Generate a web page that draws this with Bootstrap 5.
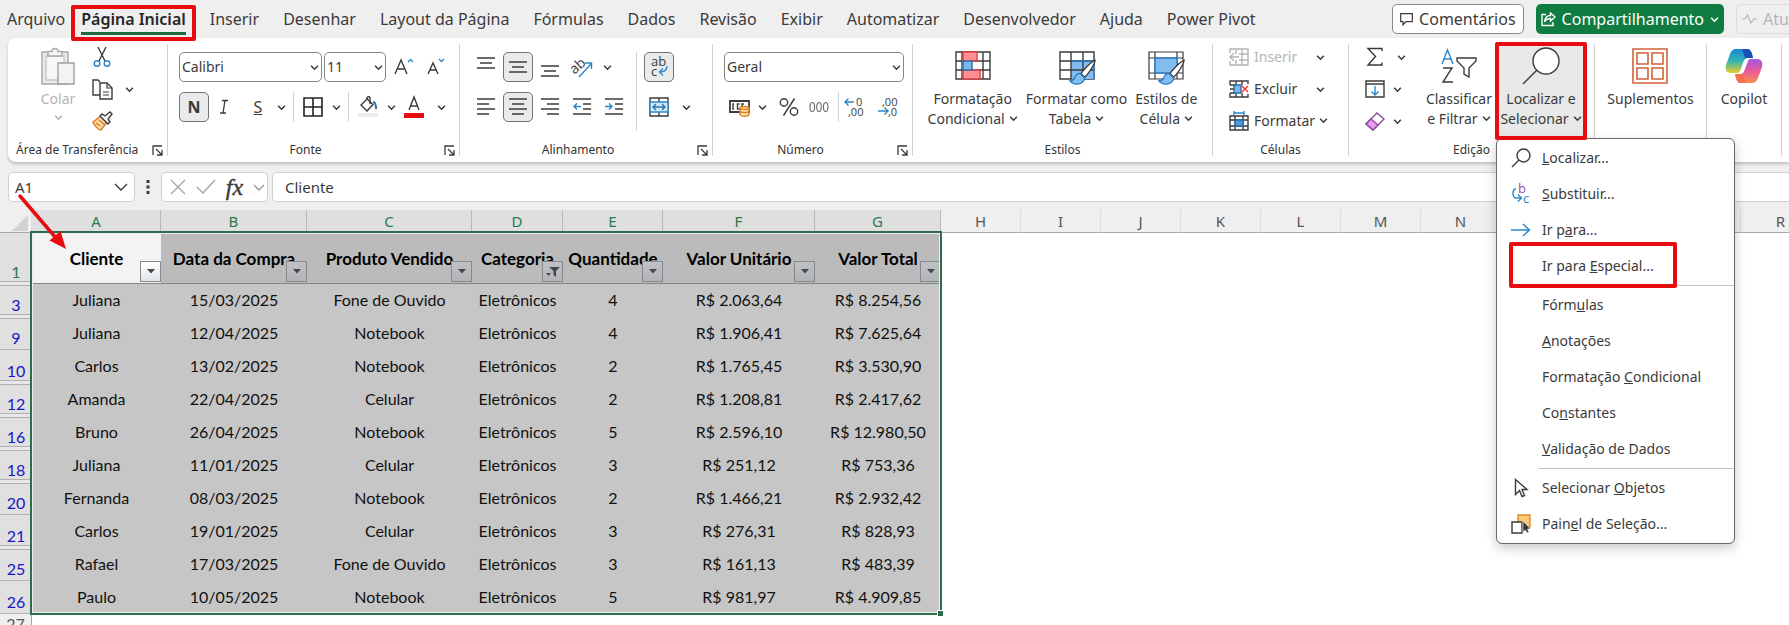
<!DOCTYPE html>
<html lang="pt-BR">
<head>
<meta charset="utf-8">
<meta name="viewport" content="width=device-width, initial-scale=1">
<title>Planilha de vendas</title>
<link href="https://cdn.jsdelivr.net/npm/bootstrap@5.3.0/dist/css/bootstrap.min.css" rel="stylesheet">
<script src="https://cdn.jsdelivr.net/npm/bootstrap@5.3.0/dist/js/bootstrap.bundle.min.js" defer></script>
<style>
  :root { --ink: #3b3b3b; --edge: #2f6b4c; --red: #e80c10; }
  body { font-family: "Noto Sans", "Open Sans", sans-serif; font-size: 14px; line-height: 20px; color: var(--ink); background: #fff; overflow: hidden; }
  button { font: inherit; color: inherit; background: none; border: 0; padding: 0; }
  svg { display: block; flex: none; fill: none; stroke: var(--ink); stroke-width: 1.4; overflow: visible; }
  svg text { stroke: none; fill: var(--ink); font-family: "Open Sans", sans-serif; }
  .shell { background: #efefef; }

  /* title tabs */
  .topbar { height: 38px; }
  .tab { position: relative; padding: 0 12px; font-size: 16px; line-height: 38px; color: var(--ink); text-decoration: none; white-space: nowrap; }
  .tab.first { padding: 0 4px 0 7px; }
  .tab.current { font-weight: 600; color: #262626; }
  .tab.current span { display: block; height: 35px; border-bottom: 3px solid #1f6b3f; }
  .marked { position: relative; }
  .marked::after { content: ""; position: absolute; inset: 0; border: 4px solid var(--red); border-radius: 2px; z-index: 1200; pointer-events: none; }
  .tab.marked::after { inset: 5px 2px -3px 2px; }
  .pill { height: 30px; border-radius: 5px; font-size: 16px; white-space: nowrap; }
  .pill-note { background: #fff; border: 1px solid #8a8a8a; padding: 0 7px; gap: 6px; }
  .pill-share { background: #107c41; color: #fff; padding: 0 5px; gap: 6px; }
  .pill-share svg { stroke: #fff; }
  .pill-update { border: 1px solid #dcdcdc; border-right: 0; border-radius: 5px 0 0 5px; color: #b5b5b5; width: 53px; padding-left: 5px; gap: 6px; }
  .pill-update svg { stroke: #b5b5b5; }

  /* ribbon */
  .ribbon { margin-left: 8px; height: 124px; padding: 6px 0; background: #fff; border-radius: 8px 0 0 8px; box-shadow: 0 2px 3px rgba(0,0,0,.2); }
  .group { position: relative; flex: none; border-right: 1px solid #d2d2d2; }
  .group-label { font-size: 12px; line-height: 12px; color: #333; }
  .launch { position: absolute; right: 4px; bottom: 0; }
  .rows { padding: 8px 0 0 11px; }
  .upper { margin-bottom: 10px; }
  .snug { gap: 2px; }
  .tool { width: 30px; height: 30px; display: flex; align-items: center; justify-content: center; flex: none; font-size: 16px; }
  .tool.on { background: #eaeaea; border: 1px solid #737373; border-radius: 5px; }
  .drop { width: 16px; height: 30px; display: flex; align-items: center; justify-content: center; flex: none; }
  .rule { width: 1px; height: 30px; background: #d2d2d2; flex: none; }
  .rule-tall { height: 79px; margin: 0 7px; }
  .pick { height: 30px; border: 1px solid #868686; border-radius: 5px; background: #fff; position: relative; }
  .pick select { width: 100%; height: 28px; border: 0; background: none; appearance: none; padding: 0 2px; color: inherit; outline: 0; }
  .pick svg { position: absolute; right: 2px; top: 10px; pointer-events: none; }
  .pick-font { width: 143px; } .pick-size { width: 62px; } .pick-number { width: 180px; }
  .big { padding-top: 4px; display: flex; flex-direction: column; align-items: center; line-height: 20px; white-space: nowrap; }
  .big .art { height: 36px; margin-bottom: 5px; display: flex; align-items: center; }
  .big .chev, .line-tool .chev { display: inline-block; vertical-align: 1px; margin-left: 4px; }
  .stack { margin-top: -3px; }
  .line-tool { height: 32px; gap: 5px; white-space: nowrap; }
  .stack .drop { height: 32px; }
  .faded { color: #b4b4b4; } .faded svg { stroke: #b4b4b4; }
  .find { width: 90px; height: 95px; background: #e8e8e8; }
  .find.marked::after { inset: -2px -1px -1px -1px; }
  .w-clip { width: 160px; } .w-font { width: 292px; } .w-align { width: 253px; } .w-num { width: 200px; }
  .w-style { width: 300px; } .w-cells { width: 136px; } .w-edit { width: 246px; } .w-add { width: 112px; } .w-pilot { width: 75px; }

  /* drop-down list */
  .find-menu { --bs-dropdown-border-color: #686868; --bs-dropdown-border-radius: 6px; --bs-dropdown-padding-y: 1px; width: 239px; top: 94px; left: 0; font-size: 14px; box-shadow: 0 4px 12px rgba(0,0,0,.22); color: var(--ink); }
  .find-menu .dropdown-item { height: 36px; display: flex; align-items: center; color: var(--ink); padding: 0 13px; gap: 10px; }
  .find-menu .slot { width: 22px; display: flex; justify-content: center; flex: none; }
  .find-menu hr { margin: 1px 0 1px 41px; border-top: 1px solid #c4c4c4; opacity: 1; }
  .find-menu .marked::after { inset: -6px 57px -4px 12px; }

  /* formula bar */
  .formula { padding: 10px 0 8px 8px; }
  .field { height: 30px; background: #fff; border: 1px solid #d0d0d0; border-radius: 5px; }
  .field input { border: 0; outline: 0; background: none; color: inherit; min-width: 0; font-size: 15px; line-height: 20px; padding: 0; }
  .name-box { width: 127px; padding: 0 6px; }
  .fx-box { width: 107px; padding: 0 2px 0 8px; }
  .fx-box em { font: italic 400 24px/24px "Liberation Serif", serif; -webkit-text-stroke: 0.4px; }
  .value-box { border-right: 0; border-radius: 5px 0 0 5px; padding-left: 12px; }
  .more { width: 26px; }

  /* sheet */
  .sheet { position: relative; overflow: hidden; }
  .cells { width: 1821px; table-layout: fixed; border-collapse: separate; border-spacing: 0; font-family: Lato, "Open Sans", sans-serif; font-size: 16px; line-height: 20px; color: #111; text-align: center; }
  .cells th, .cells td { padding: 0; }
  .cells thead th { height: 23px; font: 400 15px/22px "Noto Sans", sans-serif; background: #efefef; color: #555; border-right: 1px solid #dcdcdc; border-bottom: 1px solid #a8a8a8; }
  .cells thead .sel { background: #dfdfdf; color: #2a7a4c; border-right-color: #b8b8b8; }
  .cells thead .corner svg { margin: 3px 0 0 12px; }
  .cells tbody tr { height: 33px; }
  .cells tbody tr.top { height: 51px; }
  .cells tbody td { background: #c6c6c6; padding-bottom: 2px; }
  .cells .top td { position: relative; background: #bbb; font-size: 17px; font-weight: 700; color: #000; border-bottom: 1px solid #858585; white-space: nowrap; padding: 2px 0 0; }
  .cells .top td.active { background: #f3f3f3; }
  .cells tbody th { position: relative; background: #e0e0e0; color: #1a14c4; font-weight: 400; vertical-align: bottom; padding-bottom: 1px; border-bottom: 1px solid #b5b5b5; }
  .cells .top th { color: #2a7a4c; }
  .cells tbody th.skip { border-bottom-color: #e0e0e0; }
  .cells tbody th.skip::after { content: ""; position: absolute; z-index: 1; left: 0; right: 0; bottom: -3px; height: 5px; border: solid #b0b0b0; border-width: 1px 0; background: #e8e8e8; }
  .cells tr.next { height: 22px; }
  .cells .next th { background: #efefef; color: #555; border-right: 1px solid #a8a8a8; }
  .filter { position: absolute; right: 0; bottom: 1px; width: 21px; height: 21px; border: 1px solid #858a92; background: linear-gradient(#bfc1c5, #b3b4b8); display: flex; align-items: center; justify-content: center; }
  .active .filter { background: linear-gradient(#fff, #e2e5ea); }
  .filter svg { stroke: none; fill: #44484e; }
  .range { position: absolute; left: 30px; top: 21px; width: 912px; height: 384px; border: 2px solid var(--edge); box-shadow: inset 0 0 0 1px #e9eeea; pointer-events: none; z-index: 2; }
  .range::after { content: ""; position: absolute; right: -4px; bottom: -4px; width: 7px; height: 7px; background: var(--edge); border: 1px solid #fff; }
  .pointer { position: absolute; left: 16px; top: 192px; z-index: 5; pointer-events: none; }
</style>
</head>
<body>
<svg width="0" height="0" class="position-absolute" aria-hidden="true">
  <defs>
    <symbol id="down" viewBox="0 0 8 8"><path d="M1 2.500l3 3 3-3"/></symbol>
    <symbol id="corner" viewBox="0 0 11 11"><path d="M1 10V1h9M4 4l6 6M10 5v5H5" stroke-width="1.300"/></symbol>
    <symbol id="tri" viewBox="0 0 8 5"><path d="M0 0h8L4 4.500z"/></symbol>
    <symbol id="brush" viewBox="0 0 30 28"><path d="M29 1c-5 2-13 11-15 14l4 4C21 16 28 7 29 1z" fill="#fff"/><path d="M13 15c-4 0-5 2-6 5-1 2-3 3-5 3 4 5 14 5 16-3z" fill="#83bdf0" stroke="#2b7cc0"/></symbol>
  </defs>
</svg>

<div class="shell">
  <header class="topbar d-flex">
    <nav class="d-flex flex-nowrap" aria-label="Guias">
      <a class="tab first" href="#">Arquivo</a>
      <a class="tab current marked" href="#" aria-current="page"><span>Página Inicial</span></a>
      <a class="tab" href="#">Inserir</a>
      <a class="tab" href="#">Desenhar</a>
      <a class="tab" href="#">Layout da Página</a>
      <a class="tab" href="#">Fórmulas</a>
      <a class="tab" href="#">Dados</a>
      <a class="tab" href="#">Revisão</a>
      <a class="tab" href="#">Exibir</a>
      <a class="tab" href="#">Automatizar</a>
      <a class="tab" href="#">Desenvolvedor</a>
      <a class="tab" href="#">Ajuda</a>
      <a class="tab" href="#">Power Pivot</a>
    </nav>
    <div class="d-flex ms-auto gap-2 pt-1">
      <button class="pill pill-note d-flex align-items-center me-1" type="button">
        <svg width="13" height="13" viewBox="0 0 13 13"><path d="M.7.7h11.600v8H6L3 12V8.700H.7z" stroke-width="1.200"/></svg>Comentários
      </button>
      <button class="pill pill-share d-flex align-items-center me-1" type="button">
        <svg width="15" height="15" viewBox="0 0 15 15" stroke-width="1.200"><path d="M5 2.500H1v11h11V10M9.500 1l4.500 4-4.500 4V6.500C7 6.500 5 7.500 3.500 10 4 6 6 3.500 9.500 3.500z"/></svg>Compartilhamento
        <svg width="9" height="9"><use href="#down"/></svg>
      </button>
      <button class="pill pill-update d-flex align-items-center" type="button" disabled>
        <svg width="15" height="12" viewBox="0 0 15 12"><path d="M0 6h3l2.500-4 3.500 8 2.500-4H15" stroke-width="1.200"/></svg>Atu
      </button>
    </div>
  </header>

  <div class="ribbon d-flex">
    <section class="group w-clip d-flex flex-column">
      <div class="d-flex flex-grow-1">
        <button class="big faded ms-4 ps-2" type="button" disabled>
          <span class="art"><svg width="36" height="38" viewBox="0 0 36 38"><path d="M2 5h26v32H2z" fill="#e9e9e9" stroke="#a8a8a8"/><path d="M6 9h18v24H6z" fill="#f7f7f7" stroke="#c8c8c8"/><path d="M8 9V4.500h4a3 3 0 016 0h4V9z" fill="#f5f5f5" stroke="#a8a8a8"/><path d="M18 16h16v21H18z" fill="#f3f3f3" stroke="#a0a0a0"/></svg></span>
          <span>Colar</span>
          <svg width="9" height="9" class="mt-1"><use href="#down"/></svg>
        </button>
        <div class="stack d-flex flex-column ms-2 ps-1">
          <button class="line-tool ps-1 align-self-start" type="button" aria-label="Recortar"><svg width="20" height="22" viewBox="0 0 20 22"><path d="M6 1l7 14M14 1L7 15"/><circle cx="5" cy="17.500" r="2.800" stroke="#2b88c8"/><circle cx="15" cy="17.500" r="2.800" stroke="#2b88c8"/></svg></button>
          <span class="d-flex"><button class="line-tool ps-1" type="button" aria-label="Copiar"><svg width="21" height="21" viewBox="0 0 21 21"><path d="M8 16H1V1h5l2 2"/><path d="M8 4h7l5 5v11H8z" fill="#fff"/><path d="M15 4v5h5M11 13h6M11 16h6" stroke-width="1.200"/></svg></button>
          <button class="drop ms-2" type="button" aria-label="Opções de copiar"><svg width="9" height="9"><use href="#down"/></svg></button></span>
          <button class="line-tool ps-1 align-self-start" type="button" aria-label="Pincel de formatação"><svg width="22" height="20" viewBox="0 0 22 20"><path d="M9 5l6 6-6 8c-3 0-7-5-8-8z" fill="#fbd9a5" stroke="#dd7d1c"/><path d="M4 12l4 3M7 9l6 5" stroke="#dd7d1c"/><path d="M8 5l2-2 3 2 5-4 2 2-4 5 2 3-2 2z" fill="#fff"/></svg></button>
        </div>
      </div>
      <div class="group-label ps-2">Área de Transferência</div>
      <svg class="launch" width="11" height="11"><use href="#corner"/></svg>
    </section>

    <section class="group w-font d-flex flex-column">
      <div class="rows flex-grow-1 d-flex flex-column">
        <div class="upper d-flex snug">
          <div class="pick pick-font"><select aria-label="Fonte"><option>Calibri</option></select><svg width="9" height="9"><use href="#down"/></svg></div>
          <div class="pick pick-size"><select aria-label="Tamanho da fonte"><option>11</option></select><svg width="9" height="9"><use href="#down"/></svg></div>
          <button class="tool" type="button" aria-label="Aumentar fonte"><svg width="22" height="20" viewBox="0 0 22 20"><path d="M3 17L9 3 15 17M5.500 12h7"/><path d="M16 5l2.500-2.500L21 5" stroke="#2b88c8"/></svg></button>
          <button class="tool" type="button" aria-label="Diminuir fonte"><svg width="20" height="20" viewBox="0 0 20 20"><path d="M3 17L8 6l5 11M5 13h6"/><path d="M14 2l2.500 2.500L19 2" stroke="#2b88c8"/></svg></button>
        </div>
        <div class="d-flex">
          <button class="tool on fw-bold" type="button">N</button>
          <button class="tool" type="button" aria-label="Itálico"><svg width="10" height="16" viewBox="0 0 10 16"><path d="M3 1.500h6M1 14h6M6 1.500L4 14" stroke-width="1.300"/></svg></button>
          <button class="tool text-decoration-underline ms-1" type="button">S</button>
          <button class="drop" type="button" aria-label="Opções de sublinhado"><svg width="9" height="9"><use href="#down"/></svg></button>
          <span class="rule mx-1"></span>
          <button class="tool" type="button" aria-label="Bordas"><svg width="20" height="20" viewBox="0 0 20 20"><path d="M1 1h18v18H1zM10 1v18M1 10h18" stroke="#222" stroke-width="1.600"/></svg></button>
          <button class="drop" type="button" aria-label="Opções de bordas"><svg width="9" height="9"><use href="#down"/></svg></button>
          <span class="rule mx-1"></span>
          <button class="tool" type="button" aria-label="Cor de preenchimento"><svg width="22" height="22" viewBox="0 0 22 22"><path d="M10 3L4 9l6 6 6-6.500z"/><path d="M10 3V1.500c1-1 2.500-1 3 0V8"/><path d="M16 6c2.500 0 3 2 3 7" stroke="#2b6fa8" stroke-width="2"/><path d="M1 17h20v4H1z" fill="#ececec" stroke="none"/></svg></button>
          <button class="drop" type="button" aria-label="Opções de preenchimento"><svg width="9" height="9"><use href="#down"/></svg></button>
          <button class="tool" type="button" aria-label="Cor da fonte"><svg width="22" height="22" viewBox="0 0 22 22"><path d="M6 14l5-13 5 13M7.500 10h7"/><path d="M1 17h20v5H1z" fill="#e80c10" stroke="none"/></svg></button>
          <button class="drop ms-1" type="button" aria-label="Opções de cor da fonte"><svg width="9" height="9"><use href="#down"/></svg></button>
        </div>
      </div>
      <div class="group-label text-center pe-3">Fonte</div>
      <svg class="launch" width="11" height="11"><use href="#corner"/></svg>
    </section>

    <section class="group w-align d-flex flex-column">
      <div class="rows flex-grow-1 d-flex">
        <div>
          <div class="upper d-flex snug">
            <button class="tool" type="button" aria-label="Alinhar em cima"><svg width="18" height="20" viewBox="0 0 18 20"><path d="M0 1h18M3 6h12M0 11h18"/></svg></button>
            <button class="tool on" type="button" aria-label="Alinhar no meio"><svg width="18" height="20" viewBox="0 0 18 20"><path d="M0 5h18M3 10h12M0 15h18"/></svg></button>
            <button class="tool" type="button" aria-label="Alinhar embaixo"><svg width="18" height="20" viewBox="0 0 18 20"><path d="M0 9h18M3 14h12M0 19h18"/></svg></button>
            <button class="tool" type="button" aria-label="Orientação"><svg width="22" height="22" viewBox="0 0 22 22"><text x="0" y="14" font-size="14" transform="rotate(-42 8 12)">ab</text><path d="M8 21L20 8M14 7h6.500v6" stroke="#2b88c8"/></svg></button>
            <button class="drop" type="button" aria-label="Opções de orientação"><svg width="9" height="9"><use href="#down"/></svg></button>
          </div>
          <div class="d-flex snug">
            <button class="tool" type="button" aria-label="À esquerda"><svg width="18" height="20" viewBox="0 0 18 20"><path d="M0 2h18M0 7h12M0 12h18M0 17h12"/></svg></button>
            <button class="tool on" type="button" aria-label="Centralizar"><svg width="18" height="20" viewBox="0 0 18 20"><path d="M0 2h18M3 7h12M0 12h18M3 17h12"/></svg></button>
            <button class="tool" type="button" aria-label="À direita"><svg width="18" height="20" viewBox="0 0 18 20"><path d="M0 2h18M6 7h12M0 12h18M6 17h12"/></svg></button>
            <button class="tool" type="button" aria-label="Diminuir recuo"><svg width="18" height="20" viewBox="0 0 18 20"><path d="M0 2h18M10 7h8M10 12h8M0 17h18"/><path d="M8 9.500H1M4 6.500l-3 3 3 3" stroke="#2b88c8"/></svg></button>
            <button class="tool" type="button" aria-label="Aumentar recuo"><svg width="18" height="20" viewBox="0 0 18 20"><path d="M0 2h18M10 7h8M10 12h8M0 17h18"/><path d="M0 9.500h7M4 6.500l3 3-3 3" stroke="#2b88c8"/></svg></button>
          </div>
        </div>
        <span class="rule rule-tall"></span>
        <div>
          <button class="tool on upper" type="button" aria-label="Quebrar texto"><svg width="20" height="22" viewBox="0 0 20 22"><text x="2" y="10" font-size="13">ab</text><text x="2" y="20" font-size="13">c</text><path d="M18 10c0 4-2 6-7 6M14 12.500l-3.500 3.500 3.500 3.500" stroke="#2b88c8"/></svg></button>
          <div class="d-flex">
            <button class="tool" type="button" aria-label="Mesclar e centralizar"><svg width="20" height="20" viewBox="0 0 20 20"><path d="M1 1h18v18H1zM10 1v4M10 15v4"/><path d="M1 5h18v10H1z" fill="#d3e8f8" stroke="#2b88c8"/><path d="M4 10h12M7 7l-3 3 3 3M13 7l3 3-3 3" stroke="#2b6fa8"/></svg></button>
            <button class="drop ms-1" type="button" aria-label="Opções de mesclagem"><svg width="9" height="9"><use href="#down"/></svg></button>
          </div>
        </div>
      </div>
      <div class="group-label text-center pe-3">Alinhamento</div>
      <svg class="launch" width="11" height="11"><use href="#corner"/></svg>
    </section>

    <section class="group w-num d-flex flex-column">
      <div class="rows flex-grow-1">
        <div class="pick pick-number upper"><select aria-label="Formato de número"><option>Geral</option></select><svg width="9" height="9"><use href="#down"/></svg></div>
        <div class="d-flex">
          <button class="tool" type="button" aria-label="Formato contábil"><svg width="21" height="20" viewBox="0 0 21 20"><path d="M1 4h19v11H1z" stroke-width="1.800"/><path d="M5 7H4v5h1M10.500 7H8.500v5h2M15 7h-2v3"/><path d="M11 11c0-2 9-2 9 0v6c0 3-9 3-9 0z" fill="#fde3bd" stroke="#dd7d1c"/><path d="M11 11c0 2 9 2 9 0M11 14c0 2 9 2 9 0" stroke="#dd7d1c"/></svg></button>
          <button class="drop me-1" type="button" aria-label="Opções de moeda"><svg width="9" height="9"><use href="#down"/></svg></button>
          <button class="tool" type="button" aria-label="Porcentagem"><svg width="20" height="20" viewBox="0 0 20 20"><circle cx="5" cy="5.500" r="3.700"/><circle cx="15" cy="14.500" r="3.700"/><path d="M15.500 1.500l-11 17"/></svg></button>
          <button class="tool me-1" type="button" aria-label="Separador de milhares"><svg width="20" height="14" viewBox="0 0 20 14"><g stroke="#6a6a6a" stroke-width="1.100"><ellipse cx="3.300" cy="7" rx="2.300" ry="4.500"/><ellipse cx="10" cy="7" rx="2.300" ry="4.500"/><ellipse cx="16.700" cy="7" rx="2.300" ry="4.500"/></g></svg></button>
          <span class="rule"></span>
          <button class="tool" type="button" aria-label="Aumentar casas decimais"><svg width="22" height="22" viewBox="0 0 22 22"><text x="13" y="10" font-size="11">0</text><text x="5" y="20" font-size="11">,00</text><path d="M11 6H2M5.500 2.500L2 6l3.500 3.500" stroke="#2b88c8"/></svg></button>
          <button class="tool ms-1" type="button" aria-label="Diminuir casas decimais"><svg width="22" height="22" viewBox="0 0 22 22"><text x="5" y="10" font-size="11">,00</text><text x="11" y="20" font-size="11">,0</text><path d="M1 15h10M7.500 11.500L11 15l-3.500 3.500" stroke="#2b88c8"/></svg></button>
        </div>
      </div>
      <div class="group-label text-center pe-4">Número</div>
      <svg class="launch" width="11" height="11"><use href="#corner"/></svg>
    </section>

    <section class="group w-style d-flex flex-column">
      <div class="flex-grow-1 d-flex justify-content-center gap-2">
        <button class="big" type="button">
          <span class="art"><svg width="36" height="30" viewBox="0 0 36 30"><path d="M1 1h34v27H1zM1 10h34M1 19h34M7 1v27M28 1v27"/><path d="M8 1h14v9H8zM8 19h17v9H8z" fill="#ff8f92" stroke="#dd3c3f"/><path d="M8 10h9v9H8z" fill="#7db8ec" stroke="#2b6fa8"/></svg></span>
          <span>Formatação</span><span>Condicional<svg class="chev" width="9" height="9"><use href="#down"/></svg></span>
        </button>
        <button class="big" type="button">
          <span class="art"><svg width="40" height="36" viewBox="0 0 40 36"><path d="M3 4h34v27H3z"/><path d="M14 13h23v18H14z" fill="#83bdf0" stroke="none"/><path d="M3 13h34M3 22h34M14 4v27M26 4v27"/><path d="M15 13h22v18" stroke="#2b7cc0"/><use href="#brush" x="11" y="11" width="28" height="27"/></svg></span>
          <span>Formatar como</span><span>Tabela<svg class="chev" width="9" height="9"><use href="#down"/></svg></span>
        </button>
        <button class="big" type="button">
          <span class="art"><svg width="40" height="36" viewBox="0 0 40 36"><path d="M3 4h34v27H3zM3 10h34M3 25h34M9 4v27M31 4v27" stroke-width="1.200"/><path d="M9 10h22v15H9z" fill="#83bdf0" stroke="#2b7cc0"/><use href="#brush" x="11" y="11" width="28" height="27"/></svg></span>
          <span>Estilos de</span><span>Célula<svg class="chev" width="9" height="9"><use href="#down"/></svg></span>
        </button>
      </div>
      <div class="group-label text-center">Estilos</div>
    </section>

    <section class="group w-cells d-flex flex-column ps-3">
      <div class="stack flex-grow-1">
        <div class="d-flex justify-content-between pe-3"><button class="line-tool faded d-flex align-items-center" type="button" disabled><svg width="20" height="18" viewBox="0 0 20 18"><path d="M1 5V1h18v16H1v-4M7 1v5M13 1v16M7 12v5M10 6h9M10 12h9M10 9H1M5 5L1 9l4 4"/></svg>Inserir</button><button class="drop me-1" type="button" aria-label="Opções de inserir"><svg width="9" height="9"><use href="#down"/></svg></button></div>
        <div class="d-flex justify-content-between pe-3"><button class="line-tool d-flex align-items-center" type="button"><svg width="20" height="18" viewBox="0 0 20 18"><path d="M1 5V1h18v3M1 13v4h18v-3M7 1v4M13 1v4M7 13v4M13 13v4M1 5h5M1 13h5M1 9h4"/><path d="M5 5h7v8H5z" fill="#7db8ec" stroke="#2b6fa8"/><path d="M13 6l6 6M19 6l-6 6" stroke="#e33"/></svg>Excluir</button><button class="drop me-1" type="button" aria-label="Opções de excluir"><svg width="9" height="9"><use href="#down"/></svg></button></div>
        <button class="line-tool d-flex align-items-center" type="button"><svg width="20" height="20" viewBox="0 0 20 20"><path d="M1 5h18v14H1zM1 9h18M1 15h18M6 5v14M14 5v14"/><path d="M6 9h8v6H6z" fill="#4b9be0" stroke="#2b6fa8"/><path d="M5 2h10M5 0v4M15 0v4" stroke="#2b88c8"/></svg><span>Formatar<svg class="chev" width="9" height="9"><use href="#down"/></svg></span></button>
      </div>
      <div class="group-label text-center pe-3">Células</div>
    </section>

    <section class="group w-edit d-flex flex-column">
      <div class="flex-grow-1 d-flex">
        <div class="stack ps-3">
          <div class="d-flex"><button class="line-tool d-flex align-items-center" type="button" aria-label="AutoSoma"><svg width="20" height="20" viewBox="0 0 20 20"><path d="M17 4V1.500H3l7.500 8L3 18h14v-2.500"/></svg></button><button class="drop ms-2" type="button" aria-label="Opções de soma"><svg width="9" height="9"><use href="#down"/></svg></button></div>
          <div class="d-flex"><button class="line-tool d-flex align-items-center" type="button" aria-label="Preencher"><svg width="20" height="18" viewBox="0 0 20 18"><path d="M1 1h18v16H1zM1 4h18"/><path d="M10 6v9M6.500 11.500L10 15l3.500-3.500" stroke="#2b88c8"/></svg></button><button class="drop ms-1" type="button" aria-label="Opções de preencher"><svg width="9" height="9"><use href="#down"/></svg></button></div>
          <div class="d-flex"><button class="line-tool d-flex align-items-center" type="button" aria-label="Limpar"><svg width="20" height="20" viewBox="0 0 20 20"><path d="M12 2l7 6-11 11-7-6z" fill="#fff" stroke="#8c4aa0"/><path d="M6 8l7 6-5 5-7-6z" fill="#e79cf0" stroke="#8c4aa0"/></svg></button><button class="drop ms-1" type="button" aria-label="Opções de limpar"><svg width="9" height="9"><use href="#down"/></svg></button></div>
        </div>
        <button class="big ms-auto me-1" type="button">
          <span class="art"><svg width="36" height="36" viewBox="0 0 36 36"><path d="M1 16L6.500 2 12 16M3 11h7" stroke="#2b88c8"/><path d="M2 20h9L2 34h10"/><path d="M16 10h19v3l-7 7v9l-5-3v-6l-7-7z"/></svg></span>
          <span>Classificar</span><span>e Filtrar<svg class="chev" width="9" height="9"><use href="#down"/></svg></span>
        </button>
        <div class="dropdown me-2">
          <button class="big find marked" type="button" aria-expanded="true">
            <span class="art"><svg width="38" height="38" viewBox="0 0 38 38"><circle cx="24" cy="14" r="13" fill="#fff"/><path d="M15 23L1 37"/></svg></span>
            <span>Localizar e</span><span>Selecionar<svg class="chev" width="9" height="9"><use href="#down"/></svg></span>
          </button>
          <div class="dropdown-menu find-menu show">
            <a class="dropdown-item" href="#"><span class="slot"><svg width="20" height="20" viewBox="0 0 20 20"><circle cx="12.500" cy="7.500" r="6.500"/><path d="M8 12l-7 7"/></svg></span><span><u>L</u>ocalizar...</span></a>
            <a class="dropdown-item" href="#"><span class="slot"><svg width="20" height="22" viewBox="0 0 20 22"><text x="7" y="10" font-size="13" style="fill:#9a4bb0">b</text><text x="12" y="20" font-size="13" style="fill:#2b88c8">c</text><path d="M5 6c-4 0-4 9 0 9h5M7 11.500l3.500 3.500L7 18.500" stroke="#2b88c8"/></svg></span><span><u>S</u>ubstituir...</span></a>
            <a class="dropdown-item" href="#"><span class="slot"><svg width="20" height="16" viewBox="0 0 20 16"><path d="M0 8h18M12 2l6.500 6L12 14" stroke="#2b88c8"/></svg></span><span>Ir p<u>a</u>ra...</span></a>
            <a class="dropdown-item marked" href="#"><span class="slot"></span><span>Ir para <u>E</u>special...</span></a>
            <hr>
            <a class="dropdown-item" href="#"><span class="slot"></span><span>Fórm<u>u</u>las</span></a>
            <a class="dropdown-item" href="#"><span class="slot"></span><span><u>A</u>notações</span></a>
            <a class="dropdown-item" href="#"><span class="slot"></span><span>Formatação <u>C</u>ondicional</span></a>
            <a class="dropdown-item" href="#"><span class="slot"></span><span>Co<u>n</u>stantes</span></a>
            <a class="dropdown-item" href="#"><span class="slot"></span><span><u>V</u>alidação de Dados</span></a>
            <hr>
            <a class="dropdown-item" href="#"><span class="slot"><svg width="14" height="20" viewBox="0 0 14 20"><path d="M1.500 1.500v15l4-4 2.500 6 2.500-1-2.500-6H13z"/></svg></span><span>Selecionar <u>O</u>bjetos</span></a>
            <a class="dropdown-item" href="#"><span class="slot"><svg width="20" height="20" viewBox="0 0 20 20"><path d="M7 1h12v12H7z" fill="#fcc976" stroke="#dd8a2c"/><path d="M1 8h10v11H1z" fill="#fff"/><path d="M12 7v11l2.500-2 1.500 3 2-1-1.500-3h3z" fill="#333" stroke="#fff" stroke-width=".6"/></svg></span><span>Pain<u>e</u>l de Seleção...</span></a>
          </div>
        </div>
      </div>
      <div class="group-label text-center">Edição</div>
    </section>

    <section class="group w-add d-flex justify-content-center">
      <button class="big" type="button">
        <span class="art"><svg width="36" height="36" viewBox="0 0 36 36"><path d="M1 1h34v34H1zM5 5h11v11H5zM20 5h11v11H20zM5 20h11v11H5zM20 20h11v11H20z" stroke="#d2623a" stroke-width="1.600"/></svg></span>
        <span>Suplementos</span>
      </button>
    </section>
    <section class="group w-pilot d-flex justify-content-center">
      <button class="big" type="button">
        <span class="art"><svg width="38" height="36" viewBox="0 0 38 36">
          <defs>
            <linearGradient id="ga" x1="0" y1="0" x2="0" y2="1"><stop offset="0" stop-color="#1687dc"/><stop offset=".5" stop-color="#35b3b5"/><stop offset="1" stop-color="#e8cf22"/></linearGradient>
            <linearGradient id="gb" x1="0" y1="0" x2="0" y2="1"><stop offset="0" stop-color="#a456e0"/><stop offset=".5" stop-color="#ea5a9b"/><stop offset="1" stop-color="#fb8f4a"/></linearGradient>
          </defs>
          <path d="M11 1h11c3 0 4 2 5 5l1 4h-4c-4 0-5 2-6 5l-3 8c-1 2-2 2-4 2H6c-5 0-6-4-5-8L5 6c1-3 3-5 6-5z" fill="url(#ga)" stroke="none"/>
          <path d="M17 1h5c3 0 4 2 5 5l1 4h-8z" fill="#1b4fb8" stroke="none"/>
          <path d="M27 35H16c-3 0-4-2-5-5l-1-4h4c4 0 5-2 6-5l3-8c1-2 2-2 4-2h5c5 0 6 4 5 8l-4 11c-1 3-3 5-6 5z" fill="url(#gb)" stroke="none"/>
          <path d="M10 26h8l3 9h-5c-3 0-4-2-5-5z" fill="#f2704f" stroke="none"/></svg></span>
        <span>Copilot</span>
      </button>
    </section>
  </div>

  <div class="formula d-flex">
    <div class="field name-box d-flex align-items-center">
      <input class="flex-grow-1" type="text" aria-label="Caixa de nome" value="A1">
      <svg width="14" height="14" viewBox="0 0 14 14"><path d="M1 4l6 6 6-6"/></svg>
    </div>
    <div class="more d-flex align-items-center justify-content-center"><svg width="4" height="14" viewBox="0 0 4 14"><path d="M.5 0h3v3h-3zM.5 5.500h3v3h-3zM.5 11h3v3h-3z" fill="#3b3b3b" stroke="none"/></svg></div>
    <div class="field fx-box d-flex align-items-center justify-content-between me-1">
      <svg width="16" height="16" viewBox="0 0 16 16"><path d="M1 1l14 14M15 1L1 15" stroke="#a5a5a5"/></svg>
      <svg width="20" height="16" viewBox="0 0 20 16"><path d="M1 8l6 6L19 1" stroke="#a5a5a5"/></svg>
      <em>fx</em>
      <svg width="12" height="12" viewBox="0 0 12 12"><path d="M1 4l5 5 5-5" stroke="#999"/></svg>
    </div>
    <div class="field value-box flex-grow-1 d-flex align-items-center"><input class="w-100" type="text" aria-label="Barra de fórmulas" value="Cliente"></div>
  </div>
</div>

<main class="sheet">
  <table class="cells">
    <colgroup>
      <col style="width:32px"><col style="width:129px"><col style="width:146px"><col style="width:165px"><col style="width:91px"><col style="width:100px"><col style="width:152px"><col style="width:126px"><col span="11" style="width:80px">
    </colgroup>
    <thead>
      <tr>
        <th class="corner"><svg width="16" height="16" viewBox="0 0 16 16"><path d="M16 0v16H0z" fill="#d2d2d2" stroke="none"/></svg></th>
        <th class="sel">A</th><th class="sel">B</th><th class="sel">C</th><th class="sel">D</th><th class="sel">E</th><th class="sel">F</th><th class="sel">G</th>
        <th>H</th><th>I</th><th>J</th><th>K</th><th>L</th><th>M</th><th>N</th><th>O</th><th>P</th><th>Q</th><th>R</th>
      </tr>
    </thead>
    <tbody>
      <tr class="top">
        <th class="skip">1</th>
        <td class="active">Cliente<button class="filter" type="button" aria-label="Filtrar Cliente"><svg width="8" height="5"><use href="#tri"/></svg></button></td>
        <td>Data da Compra<button class="filter" type="button" aria-label="Filtrar Data"><svg width="8" height="5"><use href="#tri"/></svg></button></td>
        <td>Produto Vendido<button class="filter" type="button" aria-label="Filtrar Produto"><svg width="8" height="5"><use href="#tri"/></svg></button></td>
        <td>Categoria<button class="filter" type="button" aria-label="Filtrar Categoria"><svg width="14" height="12" viewBox="0 0 14 12"><path d="M3 1h11l-4 4v6L7.500 9V5zM0 7h5L2.500 10z"/></svg></button></td>
        <td>Quantidade<button class="filter" type="button" aria-label="Filtrar Quantidade"><svg width="8" height="5"><use href="#tri"/></svg></button></td>
        <td>Valor Unitário<button class="filter" type="button" aria-label="Filtrar Valor Unitário"><svg width="8" height="5"><use href="#tri"/></svg></button></td>
        <td>Valor Total<button class="filter" type="button" aria-label="Filtrar Valor Total"><svg width="8" height="5"><use href="#tri"/></svg></button></td>
      </tr>
      <tr><th class="skip">3</th><td>Juliana</td><td>15/03/2025</td><td>Fone de Ouvido</td><td>Eletrônicos</td><td>4</td><td>R$ 2.063,64</td><td>R$ 8.254,56</td></tr>
      <tr><th>9</th><td>Juliana</td><td>12/04/2025</td><td>Notebook</td><td>Eletrônicos</td><td>4</td><td>R$ 1.906,41</td><td>R$ 7.625,64</td></tr>
      <tr><th class="skip">10</th><td>Carlos</td><td>13/02/2025</td><td>Notebook</td><td>Eletrônicos</td><td>2</td><td>R$ 1.765,45</td><td>R$ 3.530,90</td></tr>
      <tr><th class="skip">12</th><td>Amanda</td><td>22/04/2025</td><td>Celular</td><td>Eletrônicos</td><td>2</td><td>R$ 1.208,81</td><td>R$ 2.417,62</td></tr>
      <tr><th class="skip">16</th><td>Bruno</td><td>26/04/2025</td><td>Notebook</td><td>Eletrônicos</td><td>5</td><td>R$ 2.596,10</td><td>R$ 12.980,50</td></tr>
      <tr><th class="skip">18</th><td>Juliana</td><td>11/01/2025</td><td>Celular</td><td>Eletrônicos</td><td>3</td><td>R$ 251,12</td><td>R$ 753,36</td></tr>
      <tr><th>20</th><td>Fernanda</td><td>08/03/2025</td><td>Notebook</td><td>Eletrônicos</td><td>2</td><td>R$ 1.466,21</td><td>R$ 2.932,42</td></tr>
      <tr><th class="skip">21</th><td>Carlos</td><td>19/01/2025</td><td>Celular</td><td>Eletrônicos</td><td>3</td><td>R$ 276,31</td><td>R$ 828,93</td></tr>
      <tr><th>25</th><td>Rafael</td><td>17/03/2025</td><td>Fone de Ouvido</td><td>Eletrônicos</td><td>3</td><td>R$ 161,13</td><td>R$ 483,39</td></tr>
      <tr><th>26</th><td>Paulo</td><td>10/05/2025</td><td>Notebook</td><td>Eletrônicos</td><td>5</td><td>R$ 981,97</td><td>R$ 4.909,85</td></tr>
      <tr class="next"><th>27</th></tr>
    </tbody>
  </table>
  <div class="range"></div>
</main>
<svg class="pointer" width="52" height="60" viewBox="0 0 52 60" aria-hidden="true"><path d="M4 4l36 42" stroke="#e80c10" stroke-width="3.500" stroke-linecap="round"/><path d="M50 57L33.500 48.500 44.500 39z" fill="#e80c10" stroke="none"/></svg>
</body>
</html>
